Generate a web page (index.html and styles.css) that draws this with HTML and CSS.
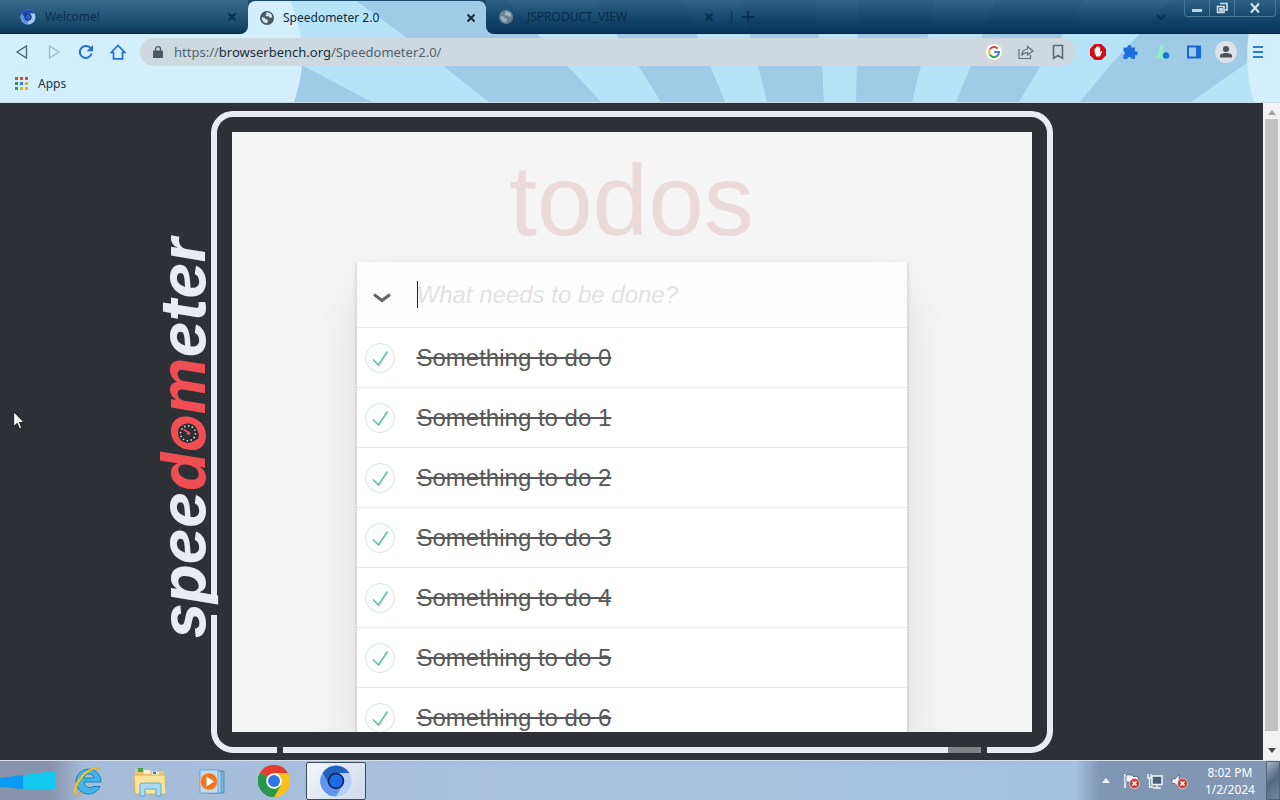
FILE: index.html
```html
<!DOCTYPE html>
<html lang="en">
<head>
<meta charset="utf-8">
<title>Speedometer 2.0</title>
<link rel="stylesheet" href="styles.css">
</head>
<body>
<svg class="defs" width="0" height="0" aria-hidden="true">
  <symbol id="globe" viewBox="0 0 14 14">
    <circle cx="7" cy="7" r="7" fill="currentColor"/>
    <path class="land" d="M1.6 6.2 4.5 6.6 5.8 8.3 7.6 8.8 8.2 10.3 6.8 12.3 4 11.4 2.2 9.3ZM6 1.6 9 1.5 11.6 3.6 12.3 6.6 9.8 6.7 8.6 5.2 6.6 5.4 5.4 4.2 6.5 3Z"/>
  </symbol>
  <symbol id="badge" viewBox="0 0 10 10">
    <circle cx="5" cy="5" r="4.6" fill="#d23a35" stroke="#f3c9c6" stroke-width=".8"/>
    <path d="M3.2 3.2 6.8 6.8M6.8 3.2 3.2 6.8" stroke="#fff" stroke-width="1.4"/>
  </symbol>
</svg>

<header class="browser">
  <svg class="rays" viewBox="0 0 1280 103" preserveAspectRatio="none" aria-hidden="true">
    <rect width="1280" height="103" fill="#b7e3f9"/>
    <g fill="#9fcbe7">
      <path d="M290 55 302 66 372 103 285 103Z"/>
      <path d="M355 0H507L539 36 567 66 601 103H489L442 66 404 36Z"/>
      <path d="M595 0H682L697 36 710 66 725 103H661L638 66 617 36Z"/>
      <path d="M742 0H815L819 36 822 66 824 103H767L758 66 750 36Z"/>
      <path d="M858 0H935L928 36 921 66 912 103H856Z"/>
      <path d="M995 0H1085L1062 36 1041 66 1019 103H956L971 66 982 36Z"/>
      <path d="M1170 0H1280V40L1191 103H1080L1110 66 1138 36Z"/>
    </g>
    <path d="M0 0H290C304 34 307 66 294 103H0ZM1280 30H1249C1245 60 1248 85 1254 103H1280Z" fill="#d3effc"/>
  </svg>

  <div class="tabs">
    <div class="strip strip-left">
      <svg class="favicon" viewBox="0 0 16 16"><circle cx="8" cy="8" r="7.5" fill="#a9c9f8"/><path d="M8 .5A7.500 7.500 0 0 0 1.500 4.500L5 9 8 4.500H14.600A7.500 7.500 0 0 0 8 .5Z" fill="#1c50b4"/><path d="M1.500 4.500A7.500 7.500 0 0 0 7 15.400L9 11.500 5 9Z" fill="#5a8fe6"/><circle cx="8" cy="8" r="3.300" fill="#2462d0" stroke="#123" stroke-width=".8"/></svg>
      <a class="tab-name" href="#">Welcome!</a>
      <button class="tab-close" aria-label="Close tab"><svg viewBox="0 0 8 8"><path d="M.5.5l7 7M7.500.5l-7 7"/></svg></button>
    </div>
    <div class="active-wrap">
      <div class="active-tab">
        <svg class="favicon globe"><use href="#globe"/></svg>
        <a class="tab-name" href="#">Speedometer 2.0</a>
        <button class="tab-close" aria-label="Close tab"><svg viewBox="0 0 8 8"><path d="M.5.5l7 7M7.500.5l-7 7"/></svg></button>
      </div>
    </div>
    <div class="strip strip-right">
      <svg class="favicon globe faded"><use href="#globe"/></svg>
      <a class="tab-name third" href="#">JSPRODUCT_VIEW</a>
      <button class="tab-close" aria-label="Close tab"><svg viewBox="0 0 8 8"><path d="M.5.5l7 7M7.500.5l-7 7"/></svg></button>
      <button class="new-tab" aria-label="New tab"><svg viewBox="0 0 12 12"><path d="M6 0v12M0 6h12"/></svg></button>
      <button class="tab-search" aria-label="Search tabs"><svg viewBox="0 0 10 6"><path d="M1 1l4 4 4-4"/></svg></button>
      <div class="window-buttons">
        <button aria-label="Minimize"><svg viewBox="0 0 12 12"><path d="M1 7h10v3H1z" fill="#b8d4e6"/></svg></button>
        <button aria-label="Restore"><svg viewBox="0 0 12 12"><path d="M4 1.500h7v6.500H9M1.500 4.500h6.500v6h-6.500zM4 6.700h2v2h-2z" fill="none" stroke="#cfe2ee" stroke-width="1.600"/></svg></button>
        <button class="close-window" aria-label="Close"><svg viewBox="0 0 12 12"><path d="M2 1.500l8 9M10 1.500l-8 9" stroke="#d5e5ef" stroke-width="2"/></svg></button>
      </div>
    </div>
  </div>

  <div class="toolbar">
    <button class="tool" aria-label="Back"><svg viewBox="0 0 16 16"><path d="M12.500 2v12L3 8z" fill="none" stroke="#47616f" stroke-width="1.300"/></svg></button>
    <button class="tool" aria-label="Forward"><svg viewBox="0 0 16 16"><path d="M3.500 2v12L13 8z" fill="none" stroke="#a3bac6" stroke-width="1.300"/></svg></button>
    <button class="tool" aria-label="Reload"><svg viewBox="0 0 16 16"><path d="M13.600 9.500A6 6 0 1 1 12 3.600L13 4.600" fill="none" stroke="#1f6fdc" stroke-width="2"/><path d="M15 1v6.300H8.700z" fill="#1f6fdc"/></svg></button>
    <button class="tool" aria-label="Home"><svg viewBox="0 0 16 16"><path d="M1.200 8.500 8 1.500l6.800 7H12.500v6.300H3.500V8.500z" fill="none" stroke="#1f6fdc" stroke-width="1.700"/></svg></button>
    <div class="omnibox">
      <svg class="lock" viewBox="0 0 10 12"><path d="M1 4.500h8a1 1 0 0 1 1 1V11a1 1 0 0 1-1 1H1a1 1 0 0 1-1-1V5.500a1 1 0 0 1 1-1z" fill="#4b5960"/><path d="M2.500 5V3a2.500 2.300 0 0 1 5 0v2" fill="none" stroke="#4b5960" stroke-width="1.300"/></svg>
      <a class="url" href="#">https://<b>browserbench.org</b>/Speedometer2.0/</a>
      <button class="tool" aria-label="Google"><svg viewBox="0 0 16 16"><circle cx="8" cy="8" r="8" fill="#fff"/><g fill="none" stroke-width="2"><path d="M11.800 4.600A5 5 0 0 0 3.700 5.500" stroke="#e24438"/><path d="M3.700 5.500a5 5 0 0 0 0 5" stroke="#f2b824"/><path d="M3.700 10.500a5 5 0 0 0 7.700 1.200" stroke="#38a257"/><path d="M11.400 11.700A5 5 0 0 0 13 8H8.200" stroke="#3f7fe8"/></g></svg></button>
      <button class="tool" aria-label="Share"><svg viewBox="0 0 16 16" fill="none" stroke="#5f717b" stroke-width="1.200"><path d="M1 5v9.500h11.500V11"/><path d="M9.500 2.500l5.500 4.500-5.500 4V8.500C6.500 8.500 5 9.500 3.800 11.500 4 7.500 6 5.300 9.500 5z"/></svg></button>
      <button class="tool" aria-label="Bookmark"><svg viewBox="0 0 16 16"><path d="M3.500 1.500h9v12.800L8 11.500l-4.500 2.800z" fill="none" stroke="#596b75" stroke-width="1.600"/></svg></button>
    </div>
    <button class="tool" aria-label="Ad blocker"><svg viewBox="0 0 16 16"><path d="M4.700 0h6.600L16 4.700v6.600L11.300 16H4.700L0 11.300V4.700z" fill="#d40d12"/><path d="M4.600 8.500V5a.7.7 0 0 1 1.400 0V3.500a.7.700 0 0 1 1.400 0V3a.7.700 0 0 1 1.400 0v1a.7.700 0 0 1 1.400 0v4.500l.8-1.200c.7-.7 1.500 0 1 .8l-2 4.400H6.300z" fill="#fff"/></svg></button>
    <button class="tool" aria-label="Extensions"><svg viewBox="0 0 16 16"><path d="M1.500 3.500h4a2 2 0 1 1 3.800 0h3.700v3.900a2 2 0 1 1 0 3.700V15H9.500a2.100 2.100 0 0 0-4.200 0H1.500V11a2.100 2.100 0 0 0 0-4z" fill="#1f6fe0"/></svg></button>
    <button class="tool" aria-label="Labs"><svg viewBox="0 0 16 16"><path d="M5.500 1h4v5l4 8.500H1.500l4-8z" fill="#8cf0c4"/><circle cx="12" cy="11.500" r="3.200" fill="#1a73d8"/></svg></button>
    <button class="tool" aria-label="Side panel"><svg viewBox="0 0 16 16"><path d="M1 1.500h14v13H1zM3 3.500v9h7v-9z" fill="#1768d8" fill-rule="evenodd"/></svg></button>
    <button class="tool avatar" aria-label="Profile"><svg viewBox="0 0 22 22"><circle cx="11" cy="11" r="11" fill="#dbe2e8"/><circle cx="11" cy="8" r="3" fill="#4c5257"/><path d="M5 16.500v-1.700c0-3.600 12-3.600 12 0v1.700z" fill="#4c5257"/></svg></button>
    <button class="tool" aria-label="Menu"><svg viewBox="0 0 16 16"><path d="M3 3h10M3 8h10M3 13h10" stroke="#2c7ad2" stroke-width="1.800"/></svg></button>
  </div>

  <nav class="bookmarks">
    <a href="#"><svg viewBox="0 0 13 13"><g fill="#d9483b"><path d="M0 0h3v3H0zM5 0h3v3H5zM10 0h3v3h-3z"/></g><path d="M0 5h3v3H0zM0 10h3v3H0z" fill="#2f9a58"/><path d="M5 5h3v3H5z" fill="#2f7fe0"/><path d="M10 5h3v3h-3zM5 10h3v3H5zM10 10h3v3h-3z" fill="#e5ae2c"/></svg>Apps</a>
  </nav>
</header>

<main class="page">
  <div class="stage">
    <section class="frame">
      <div class="logo">spee<span class="red">d<span class="dial-o">o<svg class="dial" viewBox="0 0 20 20"><circle cx="10" cy="10" r="10" fill="#2b2e33"/><circle cx="10" cy="10" r="7.500" fill="none" stroke="#e9e6dd" stroke-width="1.500" stroke-dasharray="1.400 2.500"/><path d="M10 11 14.500 14" stroke="#f04e53" stroke-width="1.600"/><circle cx="9.500" cy="10" r="1.800" fill="#f04e53"/></svg></span>m</span>eter</div>
      <div class="viewport">
        <h1>todos</h1>
        <div class="todoapp">
          <div class="new-todo">
            <button class="toggle-all" aria-label="Mark all as complete"><svg viewBox="0 0 18 10"><path d="M1 1.500 9 7.500 17 1.500" fill="none" stroke="#666" stroke-width="3"/></svg></button>
            <div class="field"><input type="text" aria-label="New todo" placeholder="What needs to be done?"><span class="caret"></span></div>
          </div>
          <ul>
            <li><span class="check"><input type="checkbox" id="t0" checked><svg viewBox="0 0 30 30"><path d="M8 16.500 13.500 22 22.500 8.500"/></svg></span><label for="t0">Something to do 0</label></li>
            <li><span class="check"><input type="checkbox" id="t1" checked><svg viewBox="0 0 30 30"><path d="M8 16.500 13.500 22 22.500 8.500"/></svg></span><label for="t1">Something to do 1</label></li>
            <li><span class="check"><input type="checkbox" id="t2" checked><svg viewBox="0 0 30 30"><path d="M8 16.500 13.500 22 22.500 8.500"/></svg></span><label for="t2">Something to do 2</label></li>
            <li><span class="check"><input type="checkbox" id="t3" checked><svg viewBox="0 0 30 30"><path d="M8 16.500 13.500 22 22.500 8.500"/></svg></span><label for="t3">Something to do 3</label></li>
            <li><span class="check"><input type="checkbox" id="t4" checked><svg viewBox="0 0 30 30"><path d="M8 16.500 13.500 22 22.500 8.500"/></svg></span><label for="t4">Something to do 4</label></li>
            <li><span class="check"><input type="checkbox" id="t5" checked><svg viewBox="0 0 30 30"><path d="M8 16.500 13.500 22 22.500 8.500"/></svg></span><label for="t5">Something to do 5</label></li>
            <li><span class="check"><input type="checkbox" id="t6" checked><svg viewBox="0 0 30 30"><path d="M8 16.500 13.500 22 22.500 8.500"/></svg></span><label for="t6">Something to do 6</label></li>
          </ul>
        </div>
      </div>
      <div class="progress"><div class="done" style="width:95.400%"></div></div>
    </section>
  </div>
  <div class="scrollbar" aria-hidden="true">
    <svg viewBox="0 0 8 5"><path d="M4 0l4 5H0z" fill="#a2a2a2"/></svg>
    <span class="thumb"></span>
    <svg viewBox="0 0 8 5"><path d="M4 5l4-5H0z" fill="#4b4b4b"/></svg>
  </div>
  <svg class="pointer" viewBox="0 0 12 19" aria-hidden="true"><path d="M.7.8v14.800l3.500-3.300 2.300 5.400 2.200-1-2.300-5.200h4.700z" fill="#fff" stroke="#111" stroke-width=".9"/></svg>
</main>

<footer class="taskbar">
  <svg class="flag" viewBox="0 0 56 22" preserveAspectRatio="none" aria-hidden="true"><path d="M0 8 23 5v14L0 17z" fill="#0a9cf2"/><path d="M24 5 55 1v18H24z" fill="#12c8ee"/></svg>
  <button aria-label="Internet Explorer"><svg viewBox="0 0 32 32"><path d="M28 21.500A12.500 12.500 0 1 1 29 17H12c.5 6 7 6.500 9 4.500zM12 13h10c-.5-5.500-9.500-5.500-10 0z" fill="#43b4e8" stroke="#1d7cba" fill-rule="evenodd"/><path d="M3 29C-2 24 9 6 22 2.500c4-1 6 0 6 2-3-2.500-12 1-18.500 9.500C4.500 21 2.500 26 5 28.500c2 .5 4-.5 5.500-1.500C8 30 5 30.500 3 29z" fill="#f2cb39" stroke="#c99a1c" stroke-width=".5"/></svg></button>
  <button aria-label="File Explorer"><svg viewBox="0 0 32 32"><path d="M1 4h8l2 2h19v22H1z" fill="#e9c873"/><path d="M4 3h5v4H4z" fill="#4ba04a"/><path d="M10 5h6v4h-6zM18 7h7v4h-7z" fill="#f7f0d2"/><path d="M19 7h3v2h-3z" fill="#3c78c8"/><path d="M0 10h31l1 19H1z" fill="#f8e39b" stroke="#d1a94e" stroke-width=".8"/><path d="M6 31V20q0-2 2-2h17q2 0 2 2v11h-5v-7H11v7z" fill="#a9dcf3" stroke="#4b9dc8" stroke-width=".8"/></svg></button>
  <button aria-label="Media Player"><svg viewBox="0 0 32 32"><path d="M14 6h14v22H14z" fill="#79b5db" stroke="#3e7fb0" stroke-width=".7"/><path d="M12 6h13v22H12z" fill="#a8d2ec" stroke="#4889b9" stroke-width=".7"/><path d="M4 5h18v23H4z" fill="#c1dff1" stroke="#5796c0" stroke-width=".7"/><circle cx="13" cy="16.500" r="8.600" fill="#ee7623" stroke="#f8ba83"/><path d="M10.500 11.500v10l7.500-5z" fill="#fff"/></svg></button>
  <button aria-label="Chrome"><svg viewBox="0 0 32 32"><path d="M16 16 2.100 8A16 16 0 0 1 29.900 8z" fill="#e33b2e"/><path d="M16 16 29.900 8A16 16 0 0 1 16 32z" fill="#fbc116"/><path d="M16 16v16A16 16 0 0 1 2.100 8z" fill="#279847"/><path d="M16 8h13.900L23 20 16 32z" fill="#fbc116"/><path d="M2.100 8 9 20l7 4 7-4-7 12A16 16 0 0 1 2.100 8z" fill="#279847"/><circle cx="16" cy="16" r="7.800" fill="#fff"/><circle cx="16" cy="16" r="6" fill="#2e75e6"/></svg></button>
  <button class="current" aria-label="Chromium"><svg viewBox="0 0 32 32"><circle cx="16" cy="16" r="15.500" fill="#b6cffa"/><path d="M2.500 8A16 16 0 0 1 29.500 8H16L9 20z" fill="#2560bd"/><path d="M2.500 8A15.500 15.500 0 0 0 16 31.500L22.500 20H9z" fill="#5f95ee"/><circle cx="16" cy="16" r="7.500" fill="#1e6be6" stroke="#0d2450" stroke-width="1.600"/></svg></button>
  <div class="tray">
    <svg class="up" viewBox="0 0 8 5"><path d="M4 0l4 5H0z" fill="#f2f6fa"/></svg>
    <svg class="status" viewBox="0 0 18 18"><path d="M3 2v14" stroke="#f4f7fa" stroke-width="1.600"/><path d="M4 3h6l1 1.500h5V10H4z" fill="#f4f7fa" stroke="#3a4a5c" stroke-width=".6"/><use href="#badge" x="7" y="6" width="11" height="11"/></svg>
    <svg class="status" viewBox="0 0 18 18"><path d="M6 4h10v8.500H6z" fill="#48617b" stroke="#f1f5f8" stroke-width="1.500"/><path d="M11 13v3M7 16h8M2 2v4h3V2M3.500 6v9H7" fill="none" stroke="#f1f5f8" stroke-width="1.300"/></svg>
    <svg class="status" viewBox="0 0 18 18"><path d="M2 7h3l4-4.500v13L5 11.500H2z" fill="#f4f7fa" stroke="#3a4a5c" stroke-width=".6"/><use href="#badge" x="7" y="6" width="11" height="11"/></svg>
    <div class="clock"><span>8:02 PM</span><span>1/2/2024</span></div>
  </div>
  <button class="show-desktop" aria-label="Show desktop"></button>
</footer>
</body>
</html>
```

FILE: styles.css
```css
* { box-sizing: border-box; }

body {
  margin: 0;
  height: 100vh;
  display: flex;
  flex-direction: column;
  overflow: hidden;
  background: #2d3136;
  font-family: "Noto Sans", "Open Sans", sans-serif;
  font-size: 12px;
}

svg { display: block; }
.defs { position: absolute; }
ul, h1 { margin: 0; padding: 0; }
a { color: inherit; text-decoration: none; }
button {
  display: flex;
  align-items: center;
  justify-content: center;
  padding: 0;
  border: 0;
  background: none;
  color: inherit;
}

/* Browser chrome */
.browser {
  position: relative;
  flex: none;
  border-bottom: 1px solid #c9dde8;
  color: #17364a;
}
.rays { position: absolute; inset: 0; width: 100%; height: 100%; z-index: -1; }

.tabs { display: flex; height: 34px; }
.strip {
  display: flex;
  align-items: center;
  color: #0b2f4c;
  border-bottom: 1px solid #052440;
}
.strip-left {
  width: 248px;
  padding: 0 12px 0 20px;
  background: linear-gradient(#3b6a8b, #134466 85%, #0b3557);
  border-bottom-right-radius: 8px;
}
.strip-right {
  flex: 1;
  padding: 0 0 0 13px;
  background: linear-gradient(rgba(24, 76, 112, .84), rgba(3, 52, 92, .9) 60%, rgba(2, 44, 82, .95));
  border-bottom-left-radius: 8px;
}
.active-wrap { width: 238px; overflow: hidden; padding-top: 1px; }
.active-tab {
  display: flex;
  align-items: center;
  height: 33px;
  padding: 0 11px 0 12px;
  border-radius: 7px 7px 0 0;
  box-shadow: 0 0 0 8px #1c4a6c;
  color: #10293a;
}
.favicon { width: 16px; height: 16px; flex: none; }
.globe { width: 14px; height: 14px; color: #49565f; }
.land { fill: #cfe6f2; }
.faded { color: #8d979e; opacity: .7; }
.tab-name { flex: 1; padding-left: 9px; }
.third { flex: none; width: 192px; padding-left: 14px; color: #082b48; }
.tab-close svg { width: 8px; height: 8px; }
.tab-close path, .new-tab path, .tab-search path { fill: none; stroke: currentColor; stroke-width: 2; }
.new-tab { margin-left: 18px; padding-left: 10px; border-left: 1px solid #0b2f4c; }
.new-tab svg { width: 12px; height: 12px; }
.tab-search { margin-left: auto; margin-right: 18px; }
.tab-search svg { width: 10px; height: 6px; }
.window-buttons {
  display: flex;
  align-self: flex-start;
  margin-right: 4px;
  border: 1px solid #4d7893;
  border-top: 0;
  border-radius: 0 0 4px 4px;
}
.window-buttons button { width: 25px; height: 16px; border-right: 1px solid #4d7893; }
.window-buttons .close-window { width: 40px; border-right: 0; }
.window-buttons svg { width: 12px; height: 12px; }

.toolbar { display: flex; align-items: center; height: 36px; padding: 0 14px; gap: 16px; }
.tool svg { width: 16px; height: 16px; }
.avatar { margin: 0 -3px; }
.avatar svg { width: 22px; height: 22px; }
.omnibox {
  flex: 1;
  display: flex;
  align-items: center;
  gap: 16px;
  height: 28px;
  margin: 0 -1px 0 -2px;
  padding: 0 9px 0 13px;
  border-radius: 14px;
  background: #cdd8df;
}
.lock { width: 10px; height: 12px; }
.url { flex: 1; margin-left: -5px; font-size: 13px; color: #50636f; }
.url b { font-weight: 400; color: #16303f; }

.bookmarks { height: 32px; padding: 0 15px 5px; display: flex; align-items: center; }
.bookmarks a { display: flex; align-items: center; gap: 10px; }
.bookmarks svg { width: 13px; height: 13px; }

/* Benchmark page */
.page { position: relative; flex: 1; min-height: 0; display: flex; overflow: hidden; }
.stage { flex: 1; display: flex; justify-content: center; align-items: flex-start; padding-top: 8px; }
.frame {
  position: relative;
  padding: 15px;
  border: 6px solid #e9edf1;
  border-radius: 22px;
}
/* Break in the border where the logo's "p" crosses it */
.frame::before {
  content: "";
  position: absolute;
  left: -6px;
  bottom: 132px;
  width: 6px;
  height: 18px;
  background: #2d3136;
}
.viewport {
  width: 800px;
  height: 600px;
  overflow: hidden;
  background: #f5f5f5;
  font-family: "Liberation Sans", Arial, sans-serif;
}

.logo {
  position: absolute;
  right: 100%;
  bottom: 109px;
  margin-right: -6px;
  writing-mode: vertical-rl;
  transform: rotate(180deg);
  font: italic 700 62px/80px Inter, sans-serif;
  color: #e9edf1;
}
.red { color: #f04e53; }
.dial-o { position: relative; }
.dial { position: absolute; left: 22px; top: 9px; width: 20px; height: 20px; }

.progress {
  position: absolute;
  left: 60px;
  right: 60px;
  bottom: -6px;
  height: 6px;
  border: solid #2d3136;
  border-width: 0 6px;
  background: #808285;
}
.done { height: 6px; background: #e9edf1; }

/* Todo list */
h1 {
  padding: 8px 0 2px;
  text-align: center;
  font-size: 100px;
  font-weight: 400;
  line-height: 120px;
  color: #ebdada;
}
.todoapp {
  width: 550px;
  margin: 0 auto;
  background: #fff;
  box-shadow: 0 2px 4px rgba(0, 0, 0, .2), 0 25px 50px rgba(0, 0, 0, .1);
  font-size: 24px;
}
.new-todo { display: flex; align-items: center; height: 65px; background: #fefefe; }
.toggle-all { width: 50px; height: 60px; margin-right: 10px; padding-top: 6px; }
.toggle-all svg { width: 18px; height: 10px; }
.field { position: relative; flex: 1; }
.field input {
  width: 100%;
  padding: 0;
  border: 0;
  outline: 0;
  background: none;
  font: 24px/28px "Liberation Sans", Arial, sans-serif;
}
.field input::placeholder { color: #e2e2e2; font-style: italic; opacity: 1; }
.caret { position: absolute; left: 0; top: 0; width: 1px; height: 27px; background: #222; }

ul { list-style: none; }
li { display: flex; align-items: center; height: 60px; border-top: 1px solid #e8e8e8; }
.check { display: grid; margin: 0 22px 0 8px; }
.check > * { grid-area: 1 / 1; width: 30px; height: 30px; margin: 0; }
.check input { appearance: none; border: 1px solid #d5e6e0; border-radius: 50%; background: #fcfffe; }
.check svg { pointer-events: none; }
.check path { fill: none; stroke: #5dbfa8; stroke-width: 1.6; }
li label { line-height: 28px; color: #585858; text-decoration: line-through; }

.scrollbar {
  width: 17px;
  display: flex;
  flex-direction: column;
  align-items: center;
  gap: 4px;
  padding: 7px 0;
  background: #f1f1f1;
}
.scrollbar svg { width: 8px; height: 5px; }
.thumb { width: 13px; flex: 1; margin-bottom: 13px; background: #c1c1c1; }
.pointer { position: absolute; left: 13px; top: 308px; width: 12px; height: 19px; }

/* Taskbar */
.taskbar {
  flex: none;
  display: flex;
  align-items: center;
  height: 40px;
  border-top: 1px solid #d7e1ec;
  background: linear-gradient(90deg, #8893ac 0, #8893ac 50px, #a5bcd9 85px, #a8c1df 40%, #a6c1e0 calc(100% - 205px), #7f96b4 calc(100% - 180px), #8197b3);
}
.flag { width: 56px; height: 22px; margin-right: 2px; }
.taskbar > button { width: 60px; height: 38px; margin-right: 2px; }
.taskbar > button svg { width: 32px; height: 32px; }
.taskbar > .current {
  border: 1px solid #3c4c60;
  border-radius: 2px;
  background: linear-gradient(135deg, #f2f6fb, #cddbed);
}
.tray { display: flex; align-items: center; gap: 6px; margin-left: auto; }
.up { width: 8px; height: 5px; margin-right: 6px; }
.status { width: 18px; height: 18px; }
.clock { display: flex; flex-direction: column; align-items: center; margin: 0 11px 0 11px; line-height: 17px; color: #fff; }
.taskbar > .show-desktop {
  width: 14px;
  height: 39px;
  margin: 0;
  border: 1px solid #50647c;
  background: linear-gradient(135deg, #a3b3c6, #53697f 50%, #7088a0);
}
```
